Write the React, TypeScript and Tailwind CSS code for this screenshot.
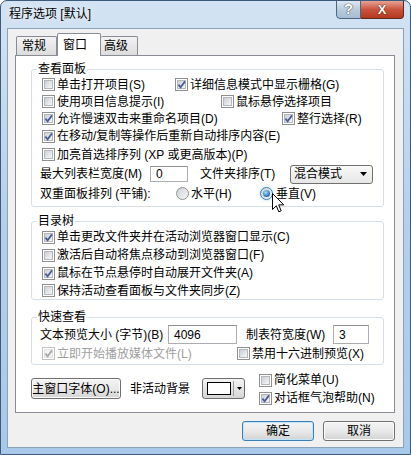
import React from 'react';

type BoxProps = { checked?: boolean; disabled?: boolean };

// Vista-style check box, 13px square
function Box({ checked = false, disabled = false }: BoxProps) {
    return (
        <span
            className={`flex h-[13px] w-[13px] shrink-0 items-center justify-center border bg-white ${
                disabled ? 'border-[#c2c2c2]' : 'border-[#8e8f8f]'
            }`}
        >
            <span
                className={`relative h-[9px] w-[9px] border ${
                    disabled
                        ? 'border-[#e2e2e2] bg-[#f4f4f4]'
                        : 'border-[#b4b8be] bg-gradient-to-br from-[#cbcfd5] to-[#f7f7f7]'
                }`}
            >
                {checked && (
                    <svg viewBox="0 0 11 11" className="absolute -left-[2px] -top-[2px] h-[11px] w-[11px]">
                        <path
                            d="M2.4 5.6 L4.6 8.2 L9 2.4"
                            fill="none"
                            stroke={disabled ? '#a8a8a8' : '#4a5f97'}
                            strokeWidth="1.8"
                        />
                    </svg>
                )}
            </span>
        </span>
    );
}

function Radio({ checked = false }: { checked?: boolean }) {
    return (
        <span
            className={`flex h-[13px] w-[13px] shrink-0 items-center justify-center rounded-full border bg-gradient-to-br from-[#cdd1d6] to-[#f7f7f7] ${
                checked ? 'border-[#3c7fb1] shadow-[0_0_3px_#9fd8f7]' : 'border-[#8e8f8f]'
            }`}
        >
            {checked && (
                <span className="h-[7px] w-[7px] rounded-full bg-[radial-gradient(circle_at_40%_35%,#a6e3fb,#1b5fae_75%)]" />
            )}
        </span>
    );
}

type OptProps = { label: string; checked?: boolean; disabled?: boolean; className?: string };

function Opt({ label, checked, disabled, className = '' }: OptProps) {
    return (
        <span className={`flex items-center gap-[2px] ${className}`}>
            <Box checked={checked} disabled={disabled} />
            <span className={`whitespace-nowrap ${disabled ? 'text-[#a0a0a0]' : ''}`}>{label}</span>
        </span>
    );
}

function Group({ title, children, className = '' }: { title: string; children: React.ReactNode; className?: string }) {
    return (
        <fieldset className={`ml-[15px] mr-[10px] rounded-[3px] border border-[#d5dfe5] ${className}`}>
            <legend className="ml-[5px] px-[1px] leading-[16px]">{title}</legend>
            {children}
        </fieldset>
    );
}

function Field({ value, className = '' }: { value: string; className?: string }) {
    return (
        <span
            className={`flex items-center border border-[#abadb3] border-t-[#8e8f8f] bg-white pl-[5px] ${className}`}
        >
            {value}
        </span>
    );
}

function Button({ label, isDefault = false, className = '' }: { label: string; isDefault?: boolean; className?: string }) {
    return (
        <span
            className={`flex items-center justify-center rounded-[3px] border bg-gradient-to-b from-[#f4f4f4] via-[#e9e9e9] to-[#d3d3d3] ${
                isDefault ? 'border-[#3c7fb1] shadow-[inset_0_0_0_1px_#bde6fd]' : 'border-[#707070] shadow-[inset_0_0_0_1px_#fbfbfb]'
            } ${className}`}
        >
            {label}
        </span>
    );
}

export default function App() {
    return (
        <div className="relative flex h-[455px] w-[411px] flex-col overflow-hidden rounded-t-[7px] border border-[#3b5a7c] bg-gradient-to-b from-[#d3e3f3] via-[#b5cfe9] to-[#a9c9ea] font-['Liberation_Sans','Noto_Sans_CJK_SC',sans-serif] text-[12px] text-black">
            {/* title bar */}
            <div className="flex h-[27px] shrink-0 items-start">
                <span className="ml-[8px] mt-[5px] leading-[16px] [text-shadow:0_0_6px_#fff]">程序选项 [默认]</span>
                <div className="ml-auto mr-[6px] -mt-px flex h-[19px]">
                    <span className="flex w-[25px] items-center justify-center rounded-bl-[4px] border border-[#4e6680] bg-gradient-to-b from-[#dde8f2] via-[#b9cbdc] to-[#a5bdd4] text-[15px] font-bold text-white [text-shadow:0_0_1px_#333,0_0_1px_#333]">
                        ?
                    </span>
                    <span className="flex w-[43px] items-center justify-center rounded-br-[4px] border border-l-0 border-[#5a2a22] bg-gradient-to-b from-[#e6a293] via-[#c8533e] to-[#b5371f] text-[13px] font-bold text-white [text-shadow:0_0_1px_#4a1008,0_0_1px_#4a1008]">
                        X
                    </span>
                </div>
            </div>

            {/* client area */}
            <div className="mx-[6px] mb-[6px] flex flex-1 flex-col border border-[#8aa3bd] bg-[#f0f0f0]">
                {/* tabs */}
                <div className="ml-[7px] flex h-[26px] items-end pl-[1px] pt-[4px]">
                    <span className="flex h-[19px] w-[41px] items-center rounded-t-[2px] border border-b-0 border-[#898c95] bg-gradient-to-b from-[#f3f3f3] to-[#dcdcdc] pl-[5px]">
                        常规
                    </span>
                    <span className="relative z-10 -mb-px flex h-[23px] w-[44px] items-start rounded-t-[2px] border border-b-0 border-[#898c95] bg-white pl-[5px] pt-[2px]">
                        窗口
                    </span>
                    <span className="flex h-[19px] w-[37px] items-center rounded-t-[2px] border border-b-0 border-l-0 border-[#898c95] bg-gradient-to-b from-[#f3f3f3] to-[#dcdcdc] pl-[3px]">
                        高级
                    </span>
                </div>

                {/* tab page */}
                <div className="ml-[7px] mr-[8px] flex h-[358px] flex-col border border-[#898c95] bg-white">
                    <Group title="查看面板" className="mt-[5px]">
                        <div className="-mt-px pb-[3px]">
                            <div className="flex h-[17px] items-center pl-[10px]">
                                <Opt label="单击打开项目(S)" className="w-[133px]" />
                                <Opt label="详细信息模式中显示栅格(G)" checked />
                            </div>
                            <div className="flex h-[17px] items-center pl-[10px]">
                                <Opt label="使用项目信息提示(I)" className="w-[179px]" />
                                <Opt label="鼠标悬停选择项目" />
                            </div>
                            <div className="flex h-[17px] items-center pl-[10px]">
                                <Opt label="允许慢速双击来重命名项目(D)" checked className="w-[240px]" />
                                <Opt label="整行选择(R)" checked />
                            </div>
                            <div className="flex h-[18px] items-center pl-[10px]">
                                <Opt label="在移动/复制等操作后重新自动排序内容(E)" checked />
                            </div>
                            <div className="flex h-[19px] items-center pl-[10px]">
                                <Opt label="加亮首选排序列 (XP 或更高版本)(P)" />
                            </div>
                            <div className="flex h-[20px] items-center pl-[8px]">
                                <span className="w-[110px]">最大列表栏宽度(M)</span>
                                <Field value="0" className="h-[16px] w-[38px]" />
                                <span className="ml-[12px] w-[90px]">文件夹排序(T)</span>
                                <span className="flex h-[19px] w-[83px] items-center justify-between rounded-[3px] border border-[#707070] bg-gradient-to-b from-[#f9f9f9] to-[#e6e6e6] pl-[3px] pr-[5px]">
                                    混合模式
                                    <svg viewBox="0 0 7 4" className="h-[4px] w-[7px]">
                                        <path d="M0 0 H7 L3.5 4 Z" fill="#000" />
                                    </svg>
                                </span>
                            </div>
                            <div className="flex h-[19px] items-center pl-[8px]">
                                <span className="w-[136px]">双重面板排列 (平铺):</span>
                                <span className="flex w-[84px] items-center gap-[2px]">
                                    <Radio />
                                    水平(H)
                                </span>
                                <span className="flex items-center gap-[3px]">
                                    <Radio checked />
                                    垂直(V)
                                </span>
                            </div>
                        </div>
                    </Group>

                    <Group title="目录树" className="mt-[6px]">
                        <div className="-mt-px pl-[10px]">
                            <div className="flex h-[18px] items-center">
                                <Opt label="单击更改文件夹并在活动浏览器窗口显示(C)" checked />
                            </div>
                            <div className="flex h-[18px] items-center">
                                <Opt label="激活后自动将焦点移动到浏览器窗口(F)" />
                            </div>
                            <div className="flex h-[18px] items-center">
                                <Opt label="鼠标在节点悬停时自动展开文件夹(A)" checked />
                            </div>
                            <div className="flex h-[17px] items-center">
                                <Opt label="保持活动查看面板与文件夹同步(Z)" />
                            </div>
                        </div>
                    </Group>

                    <Group title="快速查看" className="mt-[9px]">
                        <div className="pb-[1px]">
                            <div className="flex h-[19px] items-center pl-[8px]">
                                <span className="w-[128px]">文本预览大小 (字节)(B)</span>
                                <Field value="4096" className="h-[19px] w-[69px]" />
                                <span className="ml-[9px] w-[87px]">制表符宽度(W)</span>
                                <Field value="3" className="h-[19px] w-[36px]" />
                            </div>
                            <div className="flex h-[19px] items-center pl-[10px]">
                                <Opt label="立即开始播放媒体文件(L)" checked disabled className="w-[195px]" />
                                <Opt label="禁用十六进制预览(X)" />
                            </div>
                        </div>
                    </Group>

                    <div className="mt-[6px] flex items-start pl-[15px]">
                        <Button label="主窗口字体(O)..." className="mt-[7px] h-[21px] w-[90px]" />
                        <span className="ml-[9px] mt-[7px] flex h-[21px] w-[60px] items-center">非活动背景</span>
                        <span className="ml-[12px] mt-[7px] flex h-[21px] w-[43px] items-center rounded-[3px] border border-[#707070] bg-gradient-to-b from-[#f4f4f4] to-[#d6d6d6] pl-[4px]">
                            <span className="h-[13px] w-[24px] border border-black bg-white" />
                            <span className="ml-[2px] h-[15px] border-l border-[#a0a0a0]" />
                            <svg viewBox="0 0 5 3" className="ml-[3px] h-[3px] w-[5px]">
                                <path d="M0 0 H5 L2.5 3 Z" fill="#000" />
                            </svg>
                        </span>
                        <div className="ml-[14px] flex flex-col">
                            <div className="flex h-[18px] items-center">
                                <Opt label="简化菜单(U)" />
                            </div>
                            <div className="flex h-[18px] items-center">
                                <Opt label="对话框气泡帮助(N)" checked />
                            </div>
                        </div>
                    </div>
                </div>

                {/* dialog buttons */}
                <div className="mt-[8px] flex justify-end gap-[9px] pr-[8px]">
                    <Button label="确定" isDefault className="h-[20px] w-[72px]" />
                    <Button label="取消" className="h-[20px] w-[72px]" />
                </div>
            </div>

            {/* mouse pointer resting over the radio button */}
            <svg viewBox="0 0 13 21" className="pointer-events-none absolute left-[271px] top-[192px] h-[21px] w-[13px]">
                <path
                    d="M0.5 0.5 L0.5 16.5 L4.3 12.8 L6.8 18.8 L9.2 17.8 L6.7 11.9 L11.8 11.9 Z"
                    fill="#fff"
                    stroke="#000"
                    strokeWidth="1"
                    strokeLinejoin="round"
                />
            </svg>
        </div>
    );
}
